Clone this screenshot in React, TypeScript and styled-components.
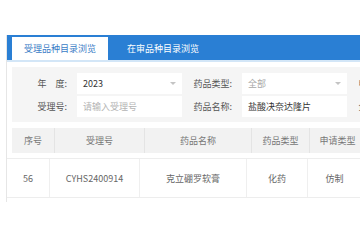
import React from 'react';
import styled, { createGlobalStyle } from 'styled-components';

const GlobalStyle = createGlobalStyle`
  html, body {
    margin: 0;
    padding: 0;
    background: #fff;
    overflow: hidden;
    font-family: 'Microsoft YaHei', 'Noto Sans CJK SC', sans-serif;
  }
`;

const Page = styled.div`
  width: 360px;
  height: 240px;
  overflow: hidden;
  padding-top: 35px;
  box-sizing: border-box;
`;

const Panel = styled.div`
  margin-left: 6px;
  width: 620px;
  border-left: 1px solid #e6e6e6;
  padding-bottom: 4px;
`;

const TabBar = styled.div`
  display: flex;
  align-items: flex-end;
  gap: 7px;
  height: 25px;
  padding-left: 5px;
  background: #2a7fd4;
  border-bottom: 2px solid #d3e6f7;
`;

const Tab = styled.div<{ $active?: boolean }>`
  display: flex;
  align-items: center;
  height: 23px;
  padding: 0 12px;
  font-size: 9px;
  white-space: nowrap;
  color: ${({ $active }) => ($active ? '#3a7cc6' : '#fff')};
  background: ${({ $active }) => ($active ? '#fff' : 'transparent')};
`;

const Content = styled.div`
  padding: 5px 0 0 5px;
`;

const Filters = styled.div`
  display: grid;
  grid-template-columns: repeat(3, 60px 105px);
  grid-auto-rows: 21px;
  row-gap: 2px;
  padding: 6px 0 5px 5px;
  background: #f5f5f5;
`;

const Label = styled.div`
  display: flex;
  align-items: center;
  justify-content: flex-end;
  padding-right: 10px;
  font-size: 9px;
  color: #555;
  white-space: nowrap;
`;

const Field = styled.div<{ $tone?: 'value' | 'hint' | 'muted' }>`
  position: relative;
  display: flex;
  align-items: center;
  padding-left: 6px;
  background: #fff;
  font-size: 9px;
  white-space: nowrap;
  color: ${({ $tone }) =>
    $tone === 'hint' ? '#b4b4b4' : $tone === 'muted' ? '#a8a8a8' : '#333'};
`;

const Caret = styled.span`
  position: absolute;
  right: 6px;
  top: 9px;
  width: 0;
  height: 0;
  border-left: 3px solid transparent;
  border-right: 3px solid transparent;
  border-top: 3px solid #c4c4c4;
`;

const Row = styled.div<{ $head?: boolean }>`
  display: grid;
  grid-template-columns: ${({ $head }) =>
    $head ? '43px 90px 107px 58px 56px' : '43px 90px 107px 61px 54px'};
  height: ${({ $head }) => ($head ? '25px' : '38px')};
  margin-top: ${({ $head }) => ($head ? '6px' : '5px')};
  margin-left: ${({ $head }) => ($head ? '0' : '-5px')};
  background: ${({ $head }) => ($head ? '#f2f2f2' : '#fff')};
  border-top: ${({ $head }) => ($head ? 'none' : '1px solid #ededed')};
  border-bottom: ${({ $head }) => ($head ? 'none' : '1px solid #ededed')};
`;

const Cell = styled.div<{ $head?: boolean }>`
  display: flex;
  align-items: center;
  justify-content: center;
  font-size: 9px;
  white-space: nowrap;
  color: ${({ $head }) => ($head ? '#777' : '#666')};
  border-right: 1px solid ${({ $head }) => ($head ? '#e4e4e4' : '#efefef')};
`;

const columns = ['序号', '受理号', '药品名称', '药品类型', '申请类型'];
const rows = [['56', 'CYHS2400914', '克立硼罗软膏', '化药', '仿制']];

export default function App() {
  return (
    <>
      <GlobalStyle />
      <Page>
        <Panel>
          <TabBar>
            <Tab $active>受理品种目录浏览</Tab>
            <Tab>在审品种目录浏览</Tab>
          </TabBar>
          <Content>
            <Filters>
              <Label>年&emsp;度:</Label>
              <Field>
                2023
                <Caret />
              </Field>
              <Label>药品类型:</Label>
              <Field $tone="muted">
                全部
                <Caret />
              </Field>
              <Label>申请类型:</Label>
              <Field $tone="muted">
                全部
                <Caret />
              </Field>
              <Label>受理号:</Label>
              <Field $tone="hint">请输入受理号</Field>
              <Label>药品名称:</Label>
              <Field>盐酸决奈达隆片</Field>
              <Label>企业名称:</Label>
              <Field $tone="hint">请输入企业名称</Field>
            </Filters>
            <Row $head>
              {columns.map((c) => (
                <Cell $head key={c}>
                  {c}
                </Cell>
              ))}
            </Row>
            {rows.map((r) => (
              <Row key={r[1]}>
                {r.map((v, i) => (
                  <Cell key={i}>{v}</Cell>
                ))}
              </Row>
            ))}
          </Content>
        </Panel>
      </Page>
    </>
  );
}
